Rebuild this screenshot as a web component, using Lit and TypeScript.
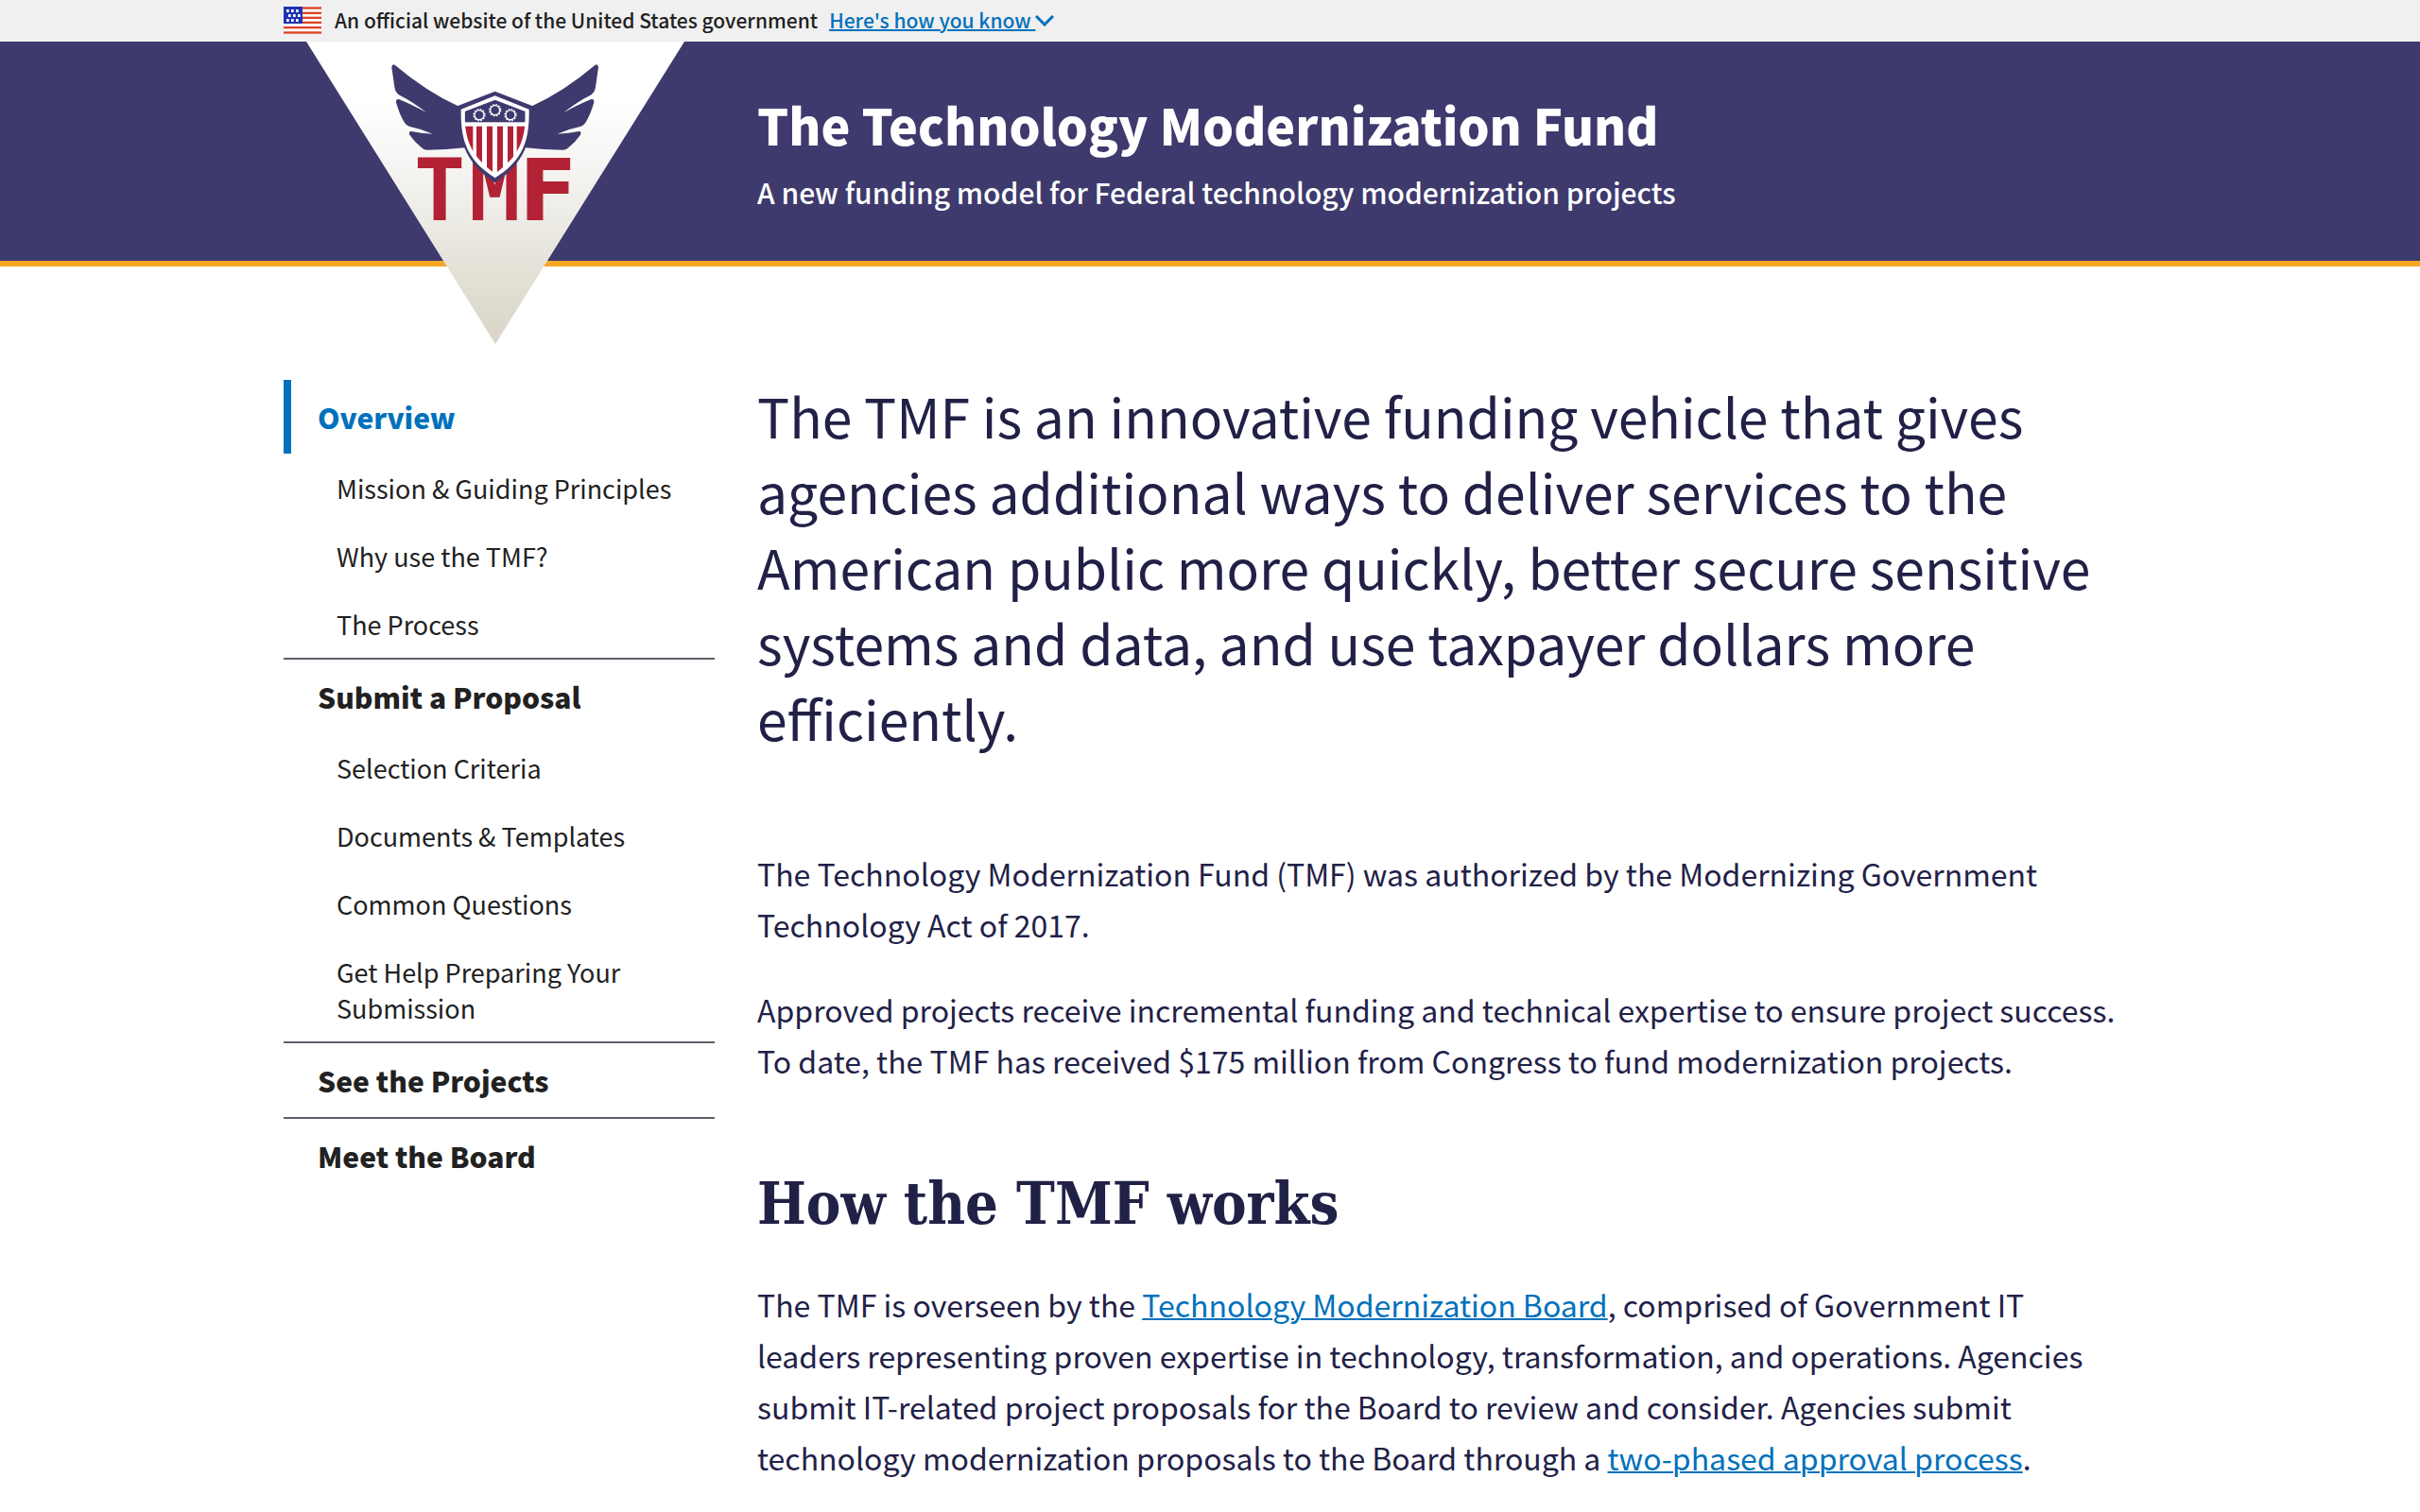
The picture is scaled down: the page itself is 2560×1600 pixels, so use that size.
import { LitElement, html, css, svg } from "lit";
import { customElement } from "lit/decorators.js";

interface NavGroup {
  label: string;
  current?: boolean;
  children: string[];
}

const NAV: NavGroup[] = [
  {
    label: "Overview",
    current: true,
    children: ["Mission & Guiding Principles", "Why use the TMF?", "The Process"],
  },
  {
    label: "Submit a Proposal",
    children: [
      "Selection Criteria",
      "Documents & Templates",
      "Common Questions",
      "Get Help Preparing Your Submission",
    ],
  },
  { label: "See the Projects", children: [] },
  { label: "Meet the Board", children: [] },
];

const wing = svg`
  <path d="M494 217 Q392 170 294 87 Q285 80 283 94 L292 156 Q295 176 308 182 Q350 203 393 237 Q345 211 306 195 Q296 193 297 205 Q308 244 322 266 Q328 278 344 283 Q382 291 413 305 Q375 303 345 297 Q335 297 340 308 Q356 331 378 349 Q384 356 395 356 Q460 355 530 347 L560 217 Z"/>`;

const GEARS: Array<[number, number]> = [
  [561, 245],
  [611, 230],
  [660, 245],
];

const STRIPES = [
  [516, 25],
  [552, 18],
  [585, 18],
  [618, 18],
  [651, 18],
  [680, 25],
];

@customElement("site-logo")
export class SiteLogo extends LitElement {
  static styles = css`
    :host {
      display: block;
    }
    .mark {
      display: block;
      width: 400px;
      height: 320px;
    }
    .letters {
      fill: #b22234;
      font-family: "DejaVu Sans Mono", monospace;
      font-weight: 700;
      font-size: 270px;
      text-anchor: middle;
    }
    .wide {
      font-family: "DejaVu Sans", sans-serif;
      text-anchor: start;
    }
  `;

  render() {
    return html`
      <svg class="mark" viewBox="12 12 1200 960" role="img" aria-label="TMF">
        <defs>
          <linearGradient id="fade" x1="0" y1="0" x2="0" y2="1">
            <stop offset="0.2" stop-color="#ffffff" />
            <stop offset="0.5" stop-color="#f1f0ed" />
            <stop offset="0.75" stop-color="#e4e2d7" />
            <stop offset="1" stop-color="#d9d5c8" />
          </linearGradient>
          <clipPath id="field">
            <path
              d="M611 197 L707 234 V262 C703 345 672 385 611 432 C550 385 519 345 515 262 V234 Z"
            />
          </clipPath>
        </defs>
        <polygon points="12,12 1212,12 612,972" fill="url(#fade)" />
        <g class="letters">
          <text x="435" y="578">T</text>
          <text x="610" y="578">M</text>
          <text class="wide" x="688" y="578">F</text>
        </g>
        <g fill="#3e3a6d">
          ${wing}
          <g transform="translate(1222 0) scale(-1 1)">${wing}</g>
          <path
            d="M611 170 L731 217 C729 330 700 402 611 460 C522 402 493 330 491 217 Z"
          />
        </g>
        <path
          fill="#ffffff"
          d="M611 184 L719 227 V250 C717 340 690 395 611 445 C532 395 505 340 503 250 V227 Z"
        />
        <g clip-path="url(#field)">
          <rect x="500" y="190" width="222" height="78" fill="#3e3a6d" />
          ${STRIPES.map(
            ([x, w]) => svg`<rect x=${x} y="281" width=${w} height="170" fill="#b22234"/>`,
          )}
        </g>
        ${GEARS.map(
          ([x, y]) => svg`
            <circle cx=${x} cy=${y} r="15" fill="none" stroke="#fff" stroke-width="4"/>
            <circle cx=${x} cy=${y} r="18" fill="none" stroke="#fff" stroke-width="4"
              stroke-dasharray="5 4.42"/>`,
        )}
      </svg>
    `;
  }
}

@customElement("app-root")
export class AppRoot extends LitElement {
  static styles = css`
    :host {
      display: block;
      background: #fff;
      color: #212147;
      font-family: "Noto Sans CJK SC", "Noto Sans", sans-serif;
    }
    .wrap {
      box-sizing: border-box;
      max-width: 2080px;
      margin: 0 auto;
      padding: 0 60px;
    }
    .banner {
      background: #f0f0f0;
      color: #212121;
      font-size: 21px;
      line-height: 40px;
      padding: 1px 0 3px;
      font-weight: 500;
    }
    .banner-row {
      display: flex;
      align-items: center;
    }
    .banner-row p {
      margin: 0 12px 0 14px;
    }
    .flag {
      width: 40px;
      height: 29px;
    }
    .know {
      display: flex;
      align-items: center;
      padding: 0;
      border: 0;
      background: none;
      color: #0071bc;
      font: inherit;
      cursor: pointer;
    }
    .know span {
      white-space: pre;
      text-decoration: underline;
      text-decoration-thickness: 2px;
    }
    .chevron {
      width: 20px;
      height: 12px;
      margin-top: 2px;
    }
    .header {
      background: #3e3a6d;
      border-bottom: 6px solid #f6a623;
      color: #fff;
    }
    .columns {
      display: grid;
      grid-template-columns: 456px minmax(0, 1fr);
      column-gap: 45px;
    }
    .header .columns {
      height: 232px;
    }
    .brand {
      margin-left: 24px;
    }
    .titles {
      padding-top: 52px;
    }
    .titles h1 {
      margin: 0 0 11px;
      font-size: 52px;
      line-height: 72px;
      font-weight: 900;
    }
    .titles p {
      margin: 0;
      font-size: 30px;
      line-height: 48px;
      font-weight: 500;
    }
    .page {
      padding-bottom: 60px;
    }
    nav {
      padding-top: 120px;
    }
    ul {
      list-style: none;
      margin: 0;
      padding: 0;
    }
    .group + .group {
      border-top: 2px solid #5b616b;
    }
    nav a {
      display: block;
      color: #212121;
      text-decoration: none;
    }
    .parent {
      padding: 20px 36px;
      font-size: 30px;
      line-height: 38px;
      font-weight: 900;
    }
    .parent.current {
      padding-left: 28px;
      border-left: 8px solid #0071bc;
      color: #0071bc;
    }
    .child {
      padding: 18px 36px 16px 56px;
      font-size: 27px;
      line-height: 38px;
    }
    main {
      padding: 117px 8px 0 0;
    }
    main p {
      margin: 0 0 36px;
      font-size: 32px;
      line-height: 54px;
    }
    main .intro {
      margin: 0 0 98px;
      font-size: 57px;
      line-height: 80px;
    }
    h2 {
      margin: 85px 0 39px;
      font-family: "DejaVu Serif Condensed", "DejaVu Serif", serif;
      font-size: 61px;
      line-height: 80px;
      font-weight: 700;
    }
    main a {
      color: #0071bc;
      text-decoration-thickness: 2px;
    }
  `;

  render() {
    return html`
      <div class="banner">
        <div class="wrap banner-row">
          <svg class="flag" viewBox="0 0 120 87" aria-hidden="true">
            <rect width="120" height="87" fill="#ffffff" />
            ${[1, 17, 32, 47, 63, 79].map(
              (y) => svg`<rect y=${y} width="120" height="7" fill="#dd4124"/>`,
            )}
            <rect width="60" height="54" fill="#1e33b1" />
            ${[
              [9, 9],
              [24, 9],
              [39, 9],
              [15, 24],
              [30, 24],
              [45, 24],
              [9, 39],
              [24, 39],
              [39, 39],
            ].map(([x, y]) => svg`<rect x=${x} y=${y} width="8" height="9" fill="#fff"/>`)}
          </svg>
          <p>An official website of the United States government</p>
          <button class="know" type="button">
            <span>Here's how you know </span>
            <svg class="chevron" viewBox="0 0 20 12" aria-hidden="true">
              <path d="M1 1 L10 10 L19 1" fill="none" stroke="#0071bc" stroke-width="3" />
            </svg>
          </button>
        </div>
      </div>
      <header class="header">
        <div class="wrap columns">
          <site-logo class="brand"></site-logo>
          <div class="titles">
            <h1>The Technology Modernization Fund</h1>
            <p>A new funding model for Federal technology modernization projects</p>
          </div>
        </div>
      </header>
      <div class="wrap columns page">
        <nav aria-label="Sections">
          <ul>
            ${NAV.map(
              (g) => html`<li class="group">
                <a class="parent ${g.current ? "current" : ""}" href="#">${g.label}</a>
                <ul>
                  ${g.children.map((c) => html`<li><a class="child" href="#">${c}</a></li>`)}
                </ul>
              </li>`,
            )}
          </ul>
        </nav>
        <main>
          <p class="intro">
            The TMF is an innovative funding vehicle that gives agencies additional ways to deliver
            services to the American public more quickly, better secure sensitive systems and data,
            and use taxpayer dollars more efficiently.
          </p>
          <p>
            The Technology Modernization Fund (TMF) was authorized by the Modernizing Government
            Technology Act of 2017.
          </p>
          <p>
            Approved projects receive incremental funding and technical expertise to ensure project
            success. To date, the TMF has received $175 million from Congress to fund modernization
            projects.
          </p>
          <h2>How the TMF works</h2>
          <p>
            The TMF is overseen by the <a href="#">Technology Modernization Board</a>, comprised of
            Government IT leaders representing proven expertise in technology, transformation, and
            operations. Agencies submit IT-related project proposals for the Board to review and
            consider. Agencies submit technology modernization proposals to the Board through a
            <a href="#">two-phased approval process</a>.
          </p>
        </main>
      </div>
    `;
  }
}
